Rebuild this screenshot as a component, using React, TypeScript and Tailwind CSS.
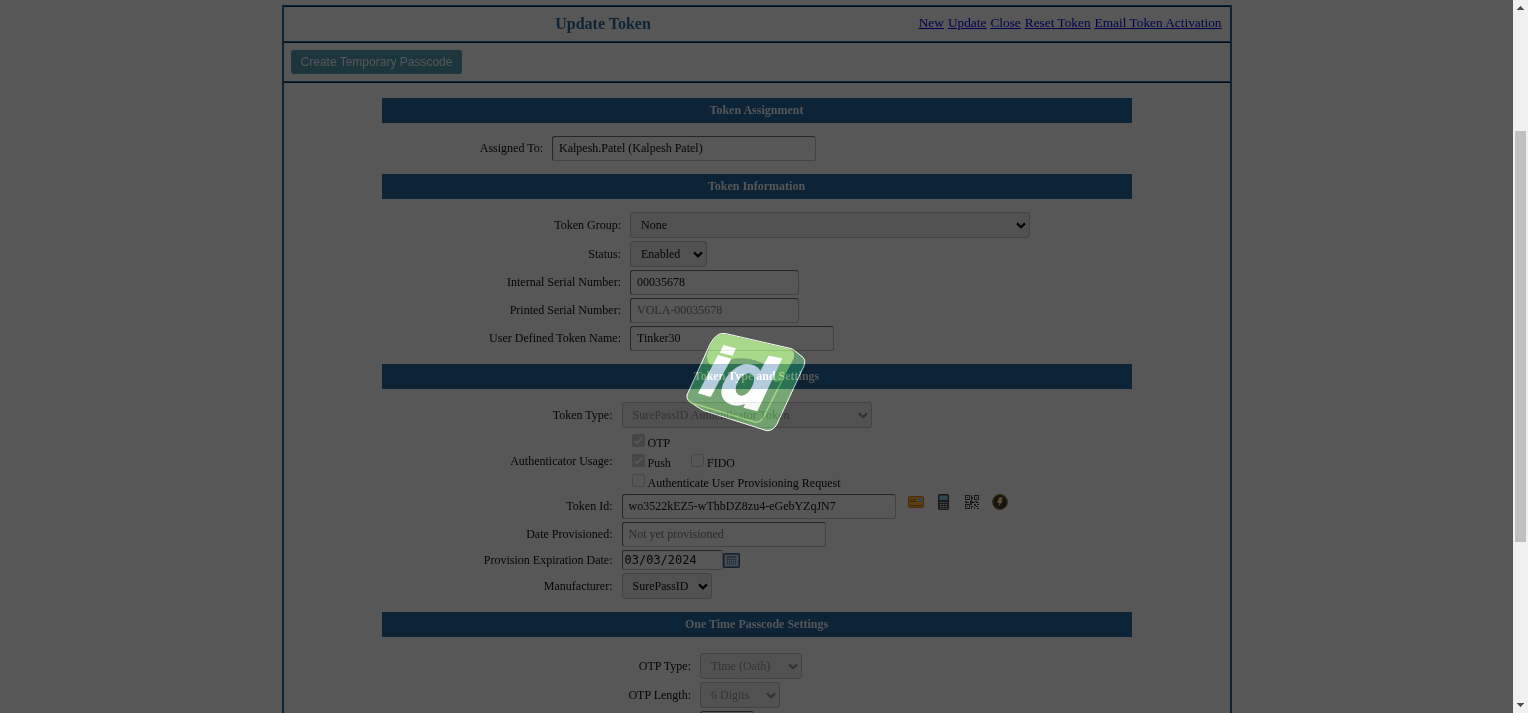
import React from "react";

function Chevron({ muted = false }: { muted?: boolean }) {
  return (
    <svg width="10" height="7" viewBox="0 0 10 7" className="shrink-0">
      <path d="M1 1.4 L5 5.2 L9 1.4" fill="none" stroke={muted ? "#333333" : "#000000"} strokeWidth="2.2" />
    </svg>
  );
}

function Select({ text, width, muted = false }: { text: string; width: string; muted?: boolean }) {
  return (
    <div
      className={`flex h-[26px] items-center justify-between rounded-[3px] border border-[#434343] bg-[#515151] pl-[10px] pr-[3px] ${width} ${muted ? "text-[#343434]" : "text-[#050505]"}`}
    >
      <span>{text}</span>
      <Chevron muted={muted} />
    </div>
  );
}

function Input({ text, width, color = "text-[#050505]" }: { text: string; width: string; color?: string }) {
  return (
    <div
      className={`flex h-[25px] items-center rounded-[3px] border border-b-[#434343] border-l-[#262626] border-r-[#434343] border-t-[#262626] pb-[1px] pl-[6px] ${width} ${color}`}
    >
      {text}
    </div>
  );
}

function Band({ children }: { children: React.ReactNode }) {
  return (
    <div className="ml-[98px] flex h-[25px] w-[750px] items-center justify-center bg-[#0d2336] pb-[1px] pr-[1px] font-bold text-[#575757]">
      {children}
    </div>
  );
}

function Row({ label, labelWidth, className = "", children }: { label: string; labelWidth: string; className?: string; children: React.ReactNode }) {
  return (
    <div className={`flex items-center gap-[9px] ${className}`}>
      <div className={`shrink-0 text-right ${labelWidth}`}>{label}</div>
      <div className="flex items-center">{children}</div>
    </div>
  );
}

function Check({ label, checked = false, className = "" }: { label: string; checked?: boolean; className?: string }) {
  return (
    <div className={`flex h-5 items-start ${className}`}>
      <svg width="13" height="13" viewBox="0 0 13 13" className="mr-[3px] mt-[3px] shrink-0">
        {checked ? (
          <>
            <rect width="13" height="13" rx="2" fill="#464646" />
            <path d="M2.8 6.8 L5.2 9.2 L10.2 3.4" fill="none" stroke="#575757" strokeWidth="1.8" />
          </>
        ) : (
          <rect x="0.5" y="0.5" width="12" height="12" rx="2" fill="none" stroke="#464646" />
        )}
      </svg>
      <span className="mt-[5px] leading-[14px]">{label}</span>
    </div>
  );
}

function Logo() {
  return (
    <svg width="140" height="115" viewBox="0 0 420 345" className="absolute left-[676px] top-[325px] mix-blend-plus-lighter">
      <path d="M128 28 Q136 24 150 26 L342 70 Q350 72 356 77 L381 97 Q389 104 386 118 L303 297 Q292 318 272 317 L96 261 Q86 259 74 252 L39 229 Q31 223 33 210 L101 60 Q112 36 128 28 Z" fill="#1f501d" stroke="#a8a8a8" strokeWidth="3" />
      <path d="M352 77 L380 99 Q387 106 383 118 L364 160 L324 156 L352 104 Q358 88 352 77 Z" fill="#0e4020" />
      <path d="M128 30 Q136 26 150 28 L340 71 Q360 79 352 102 L326 152 Q314 172 298 170 Q286 164 285 142 Q270 105 200 100 Q150 98 112 122 Q92 122 93 90 L103 62 Q114 38 128 30 Z" fill="#518133" />
      <path d="M36 223 Q44 235 60 238 L236 291 Q252 294 262 278 L322 158" fill="none" stroke="#518133" strokeWidth="4.5" />
      <path d="M142 60 L180 70 L170 92 L132 83 Z M126 90 L166 101 L104 216 L66 205 Z" fill="#a8a8a8" />
      <path fillRule="evenodd" d="M278 92 L319 100 L244 259 L202 248 L207 237 Q180 249 153 233 Q128 217 140 180 Q158 132 202 118 Q237 112 253 137 Z M220 145 Q195 145 181 181 Q174 207 194 212 Q215 214 230 181 Q242 149 220 145 Z" fill="#a8a8a8" />
    </svg>
  );
}

function CardIcon() {
  return (
    <svg width="16" height="12" viewBox="0 0 16 12" className="shrink-0">
      <rect x="0.5" y="0.5" width="15" height="11" rx="1" fill="#5c4010" stroke="#4b2b0c" />
      <path d="M2 3.5H8 M2 5.5H8 M2 9.5H14" stroke="#3a270b" />
      <rect x="10" y="2.5" width="4" height="3" fill="#1c4a60" />
    </svg>
  );
}

function CalculatorIcon() {
  return (
    <svg width="11" height="16" viewBox="0 0 12 16" preserveAspectRatio="none" className="shrink-0">
      <rect x="0.5" y="0.5" width="11" height="15" rx="1" fill="#181c20" stroke="#15191d" />
      <rect x="1.5" y="1.5" width="9" height="4.5" fill="#2d4650" />
      <path d="M2 8.5H10 M2 10.5H10 M2 12.5H10 M2 14.3H10" stroke="#505050" strokeDasharray="2 1" />
    </svg>
  );
}

function QrIcon() {
  return (
    <svg width="14" height="14" viewBox="0 0 14 14" className="shrink-0" shapeRendering="crispEdges">
      <path d="M.5 .5h4v4h-4z M9.5 .5h4v4h-4z M.5 9.5h4v4h-4z" fill="none" stroke="#1a1a1a" />
      <path d="M2 2h1v1h-1z M11 2h1v1h-1z M2 11h1v1h-1z M6 0h1v2h1v2h-1v2h-1z M0 6h2v1h2v1h-4z M5 6h3v1h2v1h-3v2h-2z M10 6h2v1h2v1h-3z M6 11h2v1h-1v2h-1z M9 9h2v2h-2z M12 9h2v1h-2z M11 11h2v1h-2z M9 12h1v2h-1z M12 13h2v1h-2z" fill="#1a1a1a" />
    </svg>
  );
}

function BoltIcon() {
  return (
    <svg width="16" height="16" viewBox="0 0 16 16" className="shrink-0">
      <circle cx="8" cy="8" r="7.3" fill="#141412" stroke="#302810" strokeWidth="1.2" />
      <path d="M7.2 3.3H11L9.3 6.7H11L6.2 12.8L7.3 8.9H5Z" fill="#5c4c28" />
    </svg>
  );
}

function CalendarIcon() {
  return (
    <svg width="17" height="15" viewBox="0 0 17 15" className="mt-[1px] shrink-0">
      <rect x="0.7" y="0.7" width="15.6" height="13.6" rx="1" fill="#454a50" stroke="#101f30" strokeWidth="1.4" />
      <rect x="4" y="3" width="9" height="9" fill="#2a333e" />
      <path d="M5 5.5H12 M5 7.5H12 M5 9.5H12 M5 11.2H12" stroke="#505860" strokeDasharray="1 1" />
    </svg>
  );
}

function Scrollbar() {
  return (
    <div className="flex h-full w-[15px] shrink-0 flex-col items-center bg-[#f1f1f1]">
      <svg width="7" height="4" viewBox="0 0 7 4" className="mt-[6px]" shapeRendering="crispEdges">
        <path d="M3 0h1v1h1v1h1v1h1v1h-7v-1h1v-1h1v-1h1z" fill="#505050" />
      </svg>
      <div className="mt-[121px] h-[411px] w-[11px] bg-[#c1c1c1]" />
      <svg width="7" height="4" viewBox="0 0 7 4" className="mb-[6px] mt-auto" shapeRendering="crispEdges">
        <path d="M0 0h7v1h-1v1h-1v1h-1v1h-1v-1h-1v-1h-1v-1h-1z" fill="#505050" />
      </svg>
    </div>
  );
}

function Rule() {
  return <div className="h-[2px] border-t border-[#0d2336] bg-[#000e1b]" />;
}

const links = ["New", "Update", "Close", "Reset Token", "Email Token Activation"];

const assignLabel = "w-[259px] pb-[1px]";
const infoLabel = "w-[337px]";
const infoInputLabel = "w-[337px] pb-[1px]";
const typeLabel = "w-[329px] pr-[0.5px]";
const typeInputLabel = "w-[329px] pr-[0.5px] pb-[1px]";
const otpLabel = "w-[407px]";

export default function App() {
  return (
    <div className="relative isolate flex h-[713px] w-[1528px] overflow-hidden bg-[#575757] font-['Liberation_Serif',serif] text-[12px] leading-[14px] text-[#050505]">
      <main className="h-[713px] w-[1513px] pl-[282px] pt-[5px]">
        <div className="h-[720px] w-[950px] border-x-2 border-[#0d2336]">
          <Rule />
          <div className="flex h-[34px] items-center">
            <h1 className="ml-[3.4px] w-[632px] text-center text-[16px] font-bold leading-[18px] text-[#0d2336]">Update Token</h1>
            <nav className="ml-auto mr-[8.5px] flex gap-[4px] whitespace-nowrap pb-[3px] text-[13.333px] leading-[15px] text-[#000051] underline">
              {links.map((link) => (
                <a key={link} href="#">{link}</a>
              ))}
            </nav>
          </div>
          <Rule />
          <div className="flex h-[38px] items-center pl-[7px]">
            <button className="h-[24px] w-[171px] rounded-[3px] bg-[#1d363d] font-['Liberation_Sans',sans-serif] text-[12px] text-[#575757]">Create Temporary Passcode</button>
          </div>
          <Rule />
          <div className="pt-[15px]">
            <Band>Token Assignment</Band>
            <Row label="Assigned To:" labelWidth={assignLabel} className="my-[13px] h-[25px]">
              <Input text="Kalpesh.Patel (Kalpesh Patel)" width="w-[264px]" />
            </Row>
            <Band>Token Information</Band>
            <div className="my-[13px] flex flex-col gap-[3px]">
              <Row label="Token Group:" labelWidth={infoLabel}>
                <Select text="None" width="w-[400px]" />
              </Row>
              <Row label="Status:" labelWidth={infoLabel}>
                <Select text="Enabled" width="w-[77px]" />
              </Row>
              <Row label="Internal Serial Number:" labelWidth={infoInputLabel}>
                <Input text="00035678" width="w-[169px]" />
              </Row>
              <Row label="Printed Serial Number:" labelWidth={infoInputLabel}>
                <Input text="VOLA-00035678" width="w-[169px]" color="text-[#2b2b2b]" />
              </Row>
              <Row label="User Defined Token Name:" labelWidth={infoInputLabel}>
                <Input text="Tinker30" width="w-[204px]" />
              </Row>
            </div>
            <Band>Token Type and Settings</Band>
            <div className="my-[13px] flex flex-col gap-[3px] [text-indent:-0.5px]">
              <Row label="Token Type:" labelWidth={typeLabel}>
                <Select text="SurePassID Authenticator Token" width="w-[250px]" muted />
              </Row>
              <Row label="Authenticator Usage:" labelWidth={typeLabel} className="h-[60px]">
                <div className="flex flex-col pl-[10px]">
                  <Check label="OTP" checked />
                  <div className="flex">
                    <Check label="Push" checked className="w-[59px]" />
                    <Check label="FIDO" className="[text-indent:0px]" />
                  </div>
                  <Check label="Authenticate User Provisioning Request" />
                </div>
              </Row>
              <Row label="Token Id:" labelWidth={typeInputLabel} className="h-[25px]">
                <Input text="wo3522kEZ5-wThbDZ8zu4-eGebYZqJN7" width="w-[274px]" />
                <div className="-mt-[9px] ml-[12px] flex items-center">
                  <CardIcon />
                  <div className="ml-[14px]"><CalculatorIcon /></div>
                  <div className="ml-[16px]"><QrIcon /></div>
                  <div className="ml-[13px]"><BoltIcon /></div>
                </div>
              </Row>
              <Row label="Date Provisioned:" labelWidth={typeInputLabel}>
                <Input text="Not yet provisioned" width="w-[204px]" color="text-[#2b2b2b]" />
              </Row>
              <Row label="Provision Expiration Date:" labelWidth={typeLabel} className="h-[20px]">
                <div className="flex h-[20px] w-[101px] items-center rounded-[2px] border border-b-[#434343] border-l-[#262626] border-r-[#434343] border-t-[#262626] pl-[2px] font-['DejaVu_Sans_Mono',monospace]">03/03/2024</div>
                <CalendarIcon />
              </Row>
              <Row label="Manufacturer:" labelWidth={typeLabel}>
                <Select text="SurePassID" width="w-[90px]" />
              </Row>
            </div>
            <Band>One Time Passcode Settings</Band>
            <div className="mt-[16px] flex flex-col gap-[3px]">
              <Row label="OTP Type:" labelWidth={otpLabel}>
                <Select text="Time (Oath)" width="w-[102px]" muted />
              </Row>
              <Row label="OTP Length:" labelWidth={otpLabel}>
                <Select text="6 Digits" width="w-[80px]" muted />
              </Row>
              <Row label="" labelWidth={otpLabel}>
                <Input text="" width="w-[54px]" />
              </Row>
            </div>
          </div>
        </div>
      </main>
      <Scrollbar />
      <Logo />
    </div>
  );
}
